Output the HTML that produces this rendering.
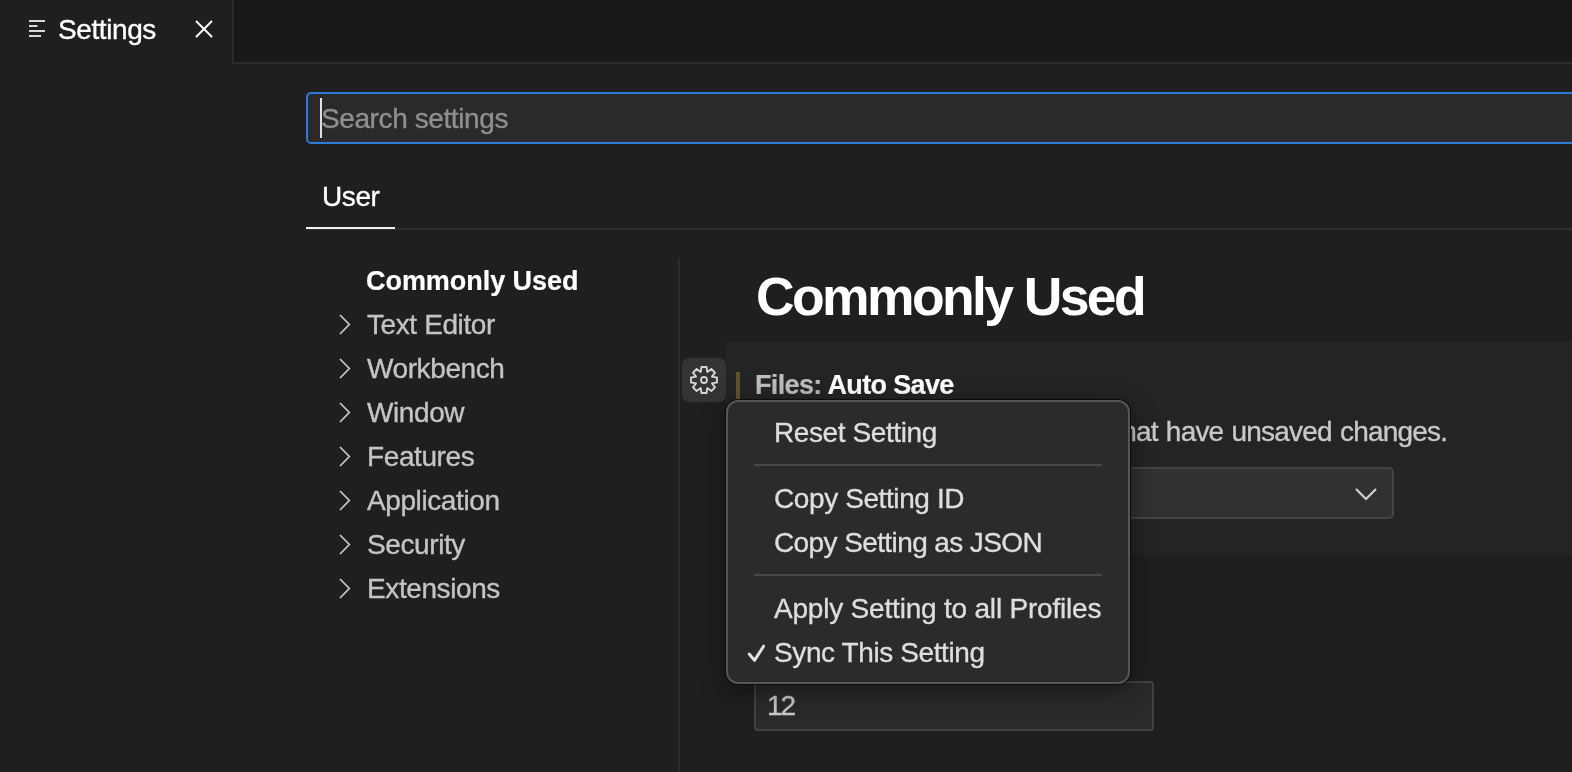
<!DOCTYPE html>
<html><head><meta charset="utf-8">
<style>
*{margin:0;padding:0;box-sizing:border-box}
html,body{width:1572px;height:772px;overflow:hidden;background:#1f1f1f;font-family:"Liberation Sans",sans-serif;color:#cccccc}
.a{position:absolute;white-space:nowrap;line-height:1}
.r,.b{will-change:transform}
.r{font-size:28px;letter-spacing:-0.4px;-webkit-text-stroke:0.35px currentColor}
.b{font-size:27px;letter-spacing:-0.3px;font-weight:bold;-webkit-text-stroke:0.2px currentColor}
</style></head><body>
<div class="a" style="left:0;top:0;width:1572px;height:64px;background:#181818"></div>
<div class="a" style="left:233px;top:62px;width:1339px;height:2px;background:#2b2b2b"></div>
<div class="a" style="left:0;top:0;width:233px;height:64px;background:#1f1f1f"></div>
<div class="a" style="left:232px;top:0;width:2px;height:64px;background:#2b2b2b"></div>
<svg class="a" style="left:28px;top:19px" width="20" height="20" viewBox="0 0 20 20">
<rect x="1" y="1" width="16" height="2" fill="#d8d8d8"/>
<rect x="1" y="6" width="8.5" height="2" fill="#d8d8d8"/>
<rect x="1" y="11" width="16" height="2" fill="#d8d8d8"/>
<rect x="1" y="16" width="12" height="2" fill="#d8d8d8"/>
</svg>
<div class="a r" style="left:58px;top:16.0px;color:#ffffff">Settings</div>
<svg class="a" style="left:194px;top:19px" width="20" height="20" viewBox="0 0 20 20">
<path d="M2 2 L18 18 M18 2 L2 18" stroke="#ffffff" stroke-width="1.9"/>
</svg>

<div class="a" style="left:306px;top:92px;width:1300px;height:52px;background:#2a2a2a;border:2px solid #2f7ad9;border-radius:5px"></div>
<div class="a r" style="left:321px;top:105.0px;color:#8f8f8f">Search settings</div>
<div class="a" style="left:320px;top:98px;width:2px;height:40px;background:#e0e0e0"></div>

<div class="a r" style="left:322px;top:182.5px;color:#ffffff">User</div>
<div class="a" style="left:306px;top:228px;width:1266px;height:2px;background:#2f2f2f"></div>
<div class="a" style="left:306px;top:227px;width:89px;height:2px;background:#f0f0f0"></div>

<div class="a b" style="left:366px;top:267.84px;color:#ffffff;letter-spacing:-0.05px">Commonly Used</div>
<svg class="a" style="left:338px;top:313.6px" width="14" height="21" viewBox="0 0 14 21"><path d="M2 1 L11.3 10.5 L2 20" fill="none" stroke="#c8c8c8" stroke-width="1.7"/></svg>
<div class="a r" style="left:367px;top:310.6px;color:#c4c4c4">Text Editor</div>
<svg class="a" style="left:338px;top:357.6px" width="14" height="21" viewBox="0 0 14 21"><path d="M2 1 L11.3 10.5 L2 20" fill="none" stroke="#c8c8c8" stroke-width="1.7"/></svg>
<div class="a r" style="left:367px;top:354.6px;color:#c4c4c4">Workbench</div>
<svg class="a" style="left:338px;top:401.6px" width="14" height="21" viewBox="0 0 14 21"><path d="M2 1 L11.3 10.5 L2 20" fill="none" stroke="#c8c8c8" stroke-width="1.7"/></svg>
<div class="a r" style="left:367px;top:398.6px;color:#c4c4c4">Window</div>
<svg class="a" style="left:338px;top:445.6px" width="14" height="21" viewBox="0 0 14 21"><path d="M2 1 L11.3 10.5 L2 20" fill="none" stroke="#c8c8c8" stroke-width="1.7"/></svg>
<div class="a r" style="left:367px;top:442.6px;color:#c4c4c4">Features</div>
<svg class="a" style="left:338px;top:489.6px" width="14" height="21" viewBox="0 0 14 21"><path d="M2 1 L11.3 10.5 L2 20" fill="none" stroke="#c8c8c8" stroke-width="1.7"/></svg>
<div class="a r" style="left:367px;top:486.6px;color:#c4c4c4">Application</div>
<svg class="a" style="left:338px;top:533.6px" width="14" height="21" viewBox="0 0 14 21"><path d="M2 1 L11.3 10.5 L2 20" fill="none" stroke="#c8c8c8" stroke-width="1.7"/></svg>
<div class="a r" style="left:367px;top:530.6px;color:#c4c4c4">Security</div>
<svg class="a" style="left:338px;top:577.6px" width="14" height="21" viewBox="0 0 14 21"><path d="M2 1 L11.3 10.5 L2 20" fill="none" stroke="#c8c8c8" stroke-width="1.7"/></svg>
<div class="a r" style="left:367px;top:574.6px;color:#c4c4c4">Extensions</div>

<div class="a" style="left:678px;top:258px;width:2px;height:514px;background:#2b2b2b"></div>

<div class="a" style="left:756px;top:269.7px;font-size:53.5px;font-weight:bold;color:#ffffff;letter-spacing:-2.62px">Commonly Used</div>

<div class="a" style="left:726px;top:342px;width:846px;height:213px;background:#232424"></div>
<div class="a" style="left:682px;top:358px;width:44px;height:44px;background:#333434;border-radius:7px"></div>
<svg class="a" style="left:688px;top:364px" width="32" height="32" viewBox="0 0 32 32"><path d="M12.74 7.93 L13.48 3.04 L18.52 3.04 L19.26 7.93 L19.40 7.99 L23.38 5.06 L26.94 8.62 L24.01 12.60 L24.07 12.74 L28.96 13.48 L28.96 18.52 L24.07 19.26 L24.01 19.40 L26.94 23.38 L23.38 26.94 L19.40 24.01 L19.26 24.07 L18.52 28.96 L13.48 28.96 L12.74 24.07 L12.60 24.01 L8.62 26.94 L5.06 23.38 L7.99 19.40 L7.93 19.26 L3.04 18.52 L3.04 13.48 L7.93 12.74 L7.99 12.60 L5.06 8.62 L8.62 5.06 L12.60 7.99 Z" fill="none" stroke="#d4d4d4" stroke-width="1.9"/><circle cx="16" cy="16" r="3.0" fill="none" stroke="#d4d4d4" stroke-width="1.8"/></svg>
<div class="a" style="left:736px;top:372px;width:4px;height:30px;background:#63512c"></div>
<div class="a b" style="left:755px;top:371.94px;color:#bdbdbd;letter-spacing:-0.65px">Files: <span style="color:#ffffff">Auto Save</span></div>
<div class="a r" style="right:125px;top:418.1px;color:#c8c8c8;letter-spacing:-0.8px;word-spacing:1.2px">Controls auto save of editors that have unsaved changes.</div>
<div class="a" style="left:755px;top:467px;width:639px;height:52px;background:#313131;border:2px solid #444444;border-radius:5px"></div>
<svg class="a" style="left:1354px;top:486px" width="24" height="16" viewBox="0 0 24 16">
<path d="M2 3 L12 13 L22 3" fill="none" stroke="#d0d0d0" stroke-width="2.2"/>
</svg>

<div class="a" style="left:754px;top:681px;width:400px;height:50px;background:#2a2a2a;border:2px solid #424242;border-radius:4px"></div>
<div class="a r" style="left:767px;top:692.4px;color:#c8c8c8;letter-spacing:-2px">12</div>

<div class="a" style="left:725px;top:399px;width:406px;height:286px;border-radius:13px;background:#0c0c0c;box-shadow:0 6px 24px rgba(0,0,0,0.45)"></div>
<div class="a" style="left:726px;top:400px;width:404px;height:284px;border-radius:12px;background:#2a2b2b;border:2px solid #565656"></div>
<div class="a r" style="left:774px;top:419.1px;color:#dedede">Reset Setting</div>
<div class="a" style="left:754px;top:464px;width:348px;height:2px;background:#474747"></div>
<div class="a r" style="left:774px;top:485.3px;color:#dedede">Copy Setting ID</div>
<div class="a r" style="left:774px;top:529.3px;color:#dedede;letter-spacing:-0.6px">Copy Setting as JSON</div>
<div class="a" style="left:754px;top:574px;width:348px;height:2px;background:#474747"></div>
<div class="a r" style="left:774px;top:595.1px;color:#dedede;letter-spacing:-0.2px">Apply Setting to all Profiles</div>
<svg class="a" style="left:745px;top:643px" width="22" height="20" viewBox="0 0 22 20">
<path d="M4.2 11 L9.5 17.4 L18.6 3.2" fill="none" stroke="#e2e2e2" stroke-width="3" stroke-linecap="round" stroke-linejoin="round"/>
</svg>
<div class="a r" style="left:774px;top:638.9px;color:#dedede">Sync This Setting</div>
</body></html>
